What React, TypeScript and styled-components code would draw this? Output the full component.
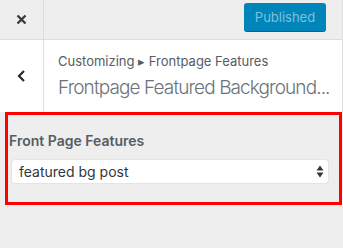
import React from "react";
import styled, { createGlobalStyle } from "styled-components";

const GlobalStyle = createGlobalStyle`
  html, body {
    margin: 0;
    padding: 0;
    background: #eeeeee;
  }
  body {
    font-family: Inter, "Noto Sans", "Liberation Sans", sans-serif;
    -webkit-font-smoothing: antialiased;
  }
`;

const Panel = styled.div`
  width: 343px;
  height: 248px;
  background: #eeeeee;
  display: flex;
  flex-direction: column;
  overflow: hidden;
`;

const TopBar = styled.div`
  display: flex;
  align-items: stretch;
  height: 39px;
  border-bottom: 1px solid #dddddd;
  border-right: 1px solid #dddddd;
  box-sizing: content-box;
  width: 342px;
`;

const SideButton = styled.div`
  width: 43px;
  flex: none;
  display: flex;
  align-items: center;
  justify-content: center;
  border-right: 1px solid #dddddd;
  color: #23282d;
`;

const Actions = styled.div`
  flex: 1;
  display: flex;
  justify-content: flex-end;
  align-items: flex-start;
  padding: 3px 16px 0 0;
`;

const PublishButton = styled.button`
  width: 82px;
  height: 28px;
  border: none;
  border-radius: 3px;
  background: #0085ba;
  color: #7fc0dd;
  font-family: Inter, "Noto Sans", sans-serif;
  font-size: 13px;
  padding: 0;
  box-shadow: 0 1px 0 #006799;
`;

const Header = styled.div`
  display: flex;
  height: 72px;
  background: #ffffff;
  border-right: 1px solid #dddddd;
  width: 342px;
`;

const Crumbs = styled.div`
  flex: 1;
  min-width: 0;
  padding: 11px 10px 0 14px;
  color: #555d66;
`;

const Breadcrumb = styled.div`
  font-size: 13px;
  line-height: 20px;
  color: #555d66;
`;

const Title = styled.div`
  font-size: 19px;
  font-weight: 300;
  line-height: 28px;
  margin-top: 3px;
  white-space: nowrap;
  color: #6b737b;
  letter-spacing: -0.9px;
`;

const Highlight = styled.div`
  margin-left: 5px;
  width: 337px;
  height: 93px;
  box-sizing: border-box;
  border: 3px solid #ff0000;
  padding: 16px 10px 0 1px;
`;

const Label = styled.div`
  font-size: 14px;
  font-weight: 600;
  line-height: 20px;
  color: #555d66;
  margin-bottom: 8px;
`;

const SelectBox = styled.div`
  margin-left: 2px;
  height: 25px;
  box-sizing: border-box;
  background: #ffffff;
  border: 1px solid #e2e4e7;
  border-radius: 4px;
  display: flex;
  align-items: center;
  justify-content: space-between;
  padding: 0 4px 0 7px;
  font-size: 14px;
  color: #32373c;
`;

const CloseIcon = () => (
  <svg width="11" height="11" viewBox="0 0 11 11">
    <path d="M1.5 1.5 L9.5 9.5 M9.5 1.5 L1.5 9.5" stroke="#32373c" strokeWidth="2.2" />
  </svg>
);

const BackIcon = () => (
  <svg width="9" height="12" viewBox="0 0 9 12">
    <path d="M7 1 L2 6 L7 11" stroke="#23282d" strokeWidth="2.2" fill="none" />
  </svg>
);

const SelectArrows = () => (
  <svg width="8" height="13" viewBox="0 0 8 13">
    <path d="M4 0.5 L7.5 5.5 L0.5 5.5 Z M4 12.5 L7.5 7.5 L0.5 7.5 Z" fill="#32373c" />
  </svg>
);

export default function App() {
  return (
    <>
      <GlobalStyle />
      <Panel>
        <TopBar>
          <SideButton>
            <CloseIcon />
          </SideButton>
          <Actions>
            <PublishButton disabled>Published</PublishButton>
          </Actions>
        </TopBar>
        <Header>
          <SideButton>
            <BackIcon />
          </SideButton>
          <Crumbs>
            <Breadcrumb>Customizing ▸ Frontpage Features</Breadcrumb>
            <Title>Frontpage Featured Background...</Title>
          </Crumbs>
        </Header>
        <Highlight>
          <Label>Front Page Features</Label>
          <SelectBox>
            <span>featured bg post</span>
            <SelectArrows />
          </SelectBox>
        </Highlight>
      </Panel>
    </>
  );
}
